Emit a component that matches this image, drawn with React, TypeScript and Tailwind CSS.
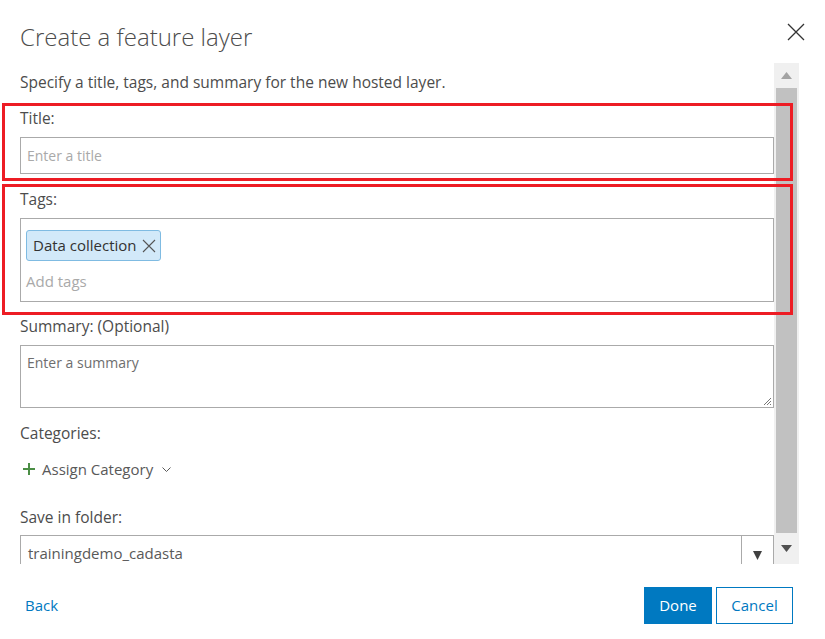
export default function App() {
  return (
    <div className="relative h-[639px] w-[825px] overflow-hidden bg-white font-['Open_Sans','Liberation_Sans',sans-serif] text-[15.5px] text-[#4c4c4c]">

      {/* Header */}

      <div className="flex h-[63px] items-start justify-between pl-[20px] pr-[19px] pt-[21px]">
        <h1 className="text-[24px] font-light leading-[32px] text-[#4c4c4c]">Create a feature layer</h1>
        <svg width="20" height="20" viewBox="0 0 20 20" className="mt-[1px]">
          <path d="M2 2 L18 18 M18 2 L2 18" stroke="#333" strokeWidth="1.3" />
        </svg>
      </div>

      {/* Scroll area */}

      <div className="flex h-[501px]">
        <div className="w-[774px] overflow-hidden pl-[20px]">
          <p className="mt-[9px] leading-[20px]">Specify a title, tags, and summary for the new hosted layer.</p>

          <label className="mt-[16px] block leading-[20px]">Title:</label>
          <div className="mt-[9px] flex h-[37px] items-center border border-[#aaa] px-[6px] text-[14px] text-[#a9a9a9]">
            Enter a title
          </div>

          <label className="mt-[15px] block leading-[20px]">Tags:</label>
          <div className="mt-[9px] h-[84px] border border-[#aaa] px-[5px] pt-[11px]">
            <span className="inline-flex h-[31px] items-center gap-[5px] rounded-[3px] border border-[#7fbbe2] bg-[#d2e9f9] pl-[6px] pr-[4px] text-[15px] text-[#323232]">
              Data collection
              <svg width="14" height="14" viewBox="0 0 14 14">
                <path d="M1 1 L13 13 M13 1 L1 13" stroke="#555" strokeWidth="1.1" />
              </svg>
            </span>
            <div className="mt-[11px] text-[15px] leading-[18px] text-[#a9a9a9]">Add tags</div>
          </div>

          <label className="mt-[14px] block leading-[20px]">Summary: (Optional)</label>
          <div className="relative mt-[9px] h-[63px] border border-[#aaa] px-[6px] pt-[8px] text-[14px] leading-[18px] text-[#6e6e6e]">
            Enter a summary
            <svg className="absolute bottom-[1px] right-[1px]" width="10" height="10" viewBox="0 0 10 10">
              <path d="M9 2 L2 9 M9 5 L5 9 M9 8 L8 9" stroke="#777" strokeWidth="1" />
            </svg>
          </div>

          <label className="mt-[15px] block leading-[20px]">Categories:</label>

          <div className="mt-[16px] flex items-center text-[15px] leading-[20px]">
            <svg width="14" height="14" viewBox="0 0 14 14" className="ml-[2px]">
              <path d="M7 1 V13 M1 7 H13" stroke="#4b8e45" strokeWidth="2" />
            </svg>
            <span className="ml-[6px] text-[#595959]">Assign Category</span>
            <svg width="9" height="5" viewBox="0 0 9 5" className="ml-[9px]">
              <path d="M0.5 0.5 L4.5 4.5 L8.5 0.5" stroke="#595959" strokeWidth="1" fill="none" />
            </svg>
          </div>

          <label className="mt-[28px] block leading-[20px]">Save in folder:</label>
          <div className="mt-[8px] flex h-[37px] border border-[#aaa]">
            <div className="flex flex-1 items-center pl-[7px] text-[15px] text-[#595959]">trainingdemo_cadasta</div>
            <div className="flex w-[32px] items-center justify-center border-l border-[#aaa] pt-[4px]">
              <svg width="9" height="9" viewBox="0 0 9 9">
                <path d="M0 0 H9 L4.5 9 Z" fill="#404040" />
              </svg>
            </div>
          </div>
        </div>

        {/* Scrollbar */}

        <div className="flex w-[25px] flex-col bg-[#f0f0f0]">
          <div className="flex h-[25px] items-center justify-center">
            <svg width="11" height="7" viewBox="0 0 11 7">
              <path d="M5.5 0 L11 7 H0 Z" fill="#a3a3a3" />
            </svg>
          </div>
          <div className="mx-[2px] flex-1 bg-[#c1c1c1]" />
          <div className="flex h-[31px] items-center justify-center">
            <svg width="11" height="7" viewBox="0 0 11 7">
              <path d="M0 0 H11 L5.5 7 Z" fill="#505050" />
            </svg>
          </div>
        </div>
      </div>

      {/* Footer */}

      <div className="flex items-center justify-between pl-[25px] pr-[32px] pt-[23px] text-[15px]">
        <a href="#" className="text-[#0079c1]">Back</a>
        <div className="flex gap-[4px]">
          <button className="h-[37px] w-[68px] bg-[#0079c1] text-white">Done</button>
          <button className="h-[37px] w-[77px] border border-[#0079c1] bg-white text-[#0079c1]">Cancel</button>
        </div>
      </div>

      {/* Annotations */}

      <div className="absolute left-[2px] top-[103px] h-[78px] w-[791px] border-[3px] border-[#ed1c24]" />
      <div className="absolute left-[2px] top-[184px] h-[131px] w-[791px] border-[3px] border-[#ed1c24]" />
    </div>
  );
}
